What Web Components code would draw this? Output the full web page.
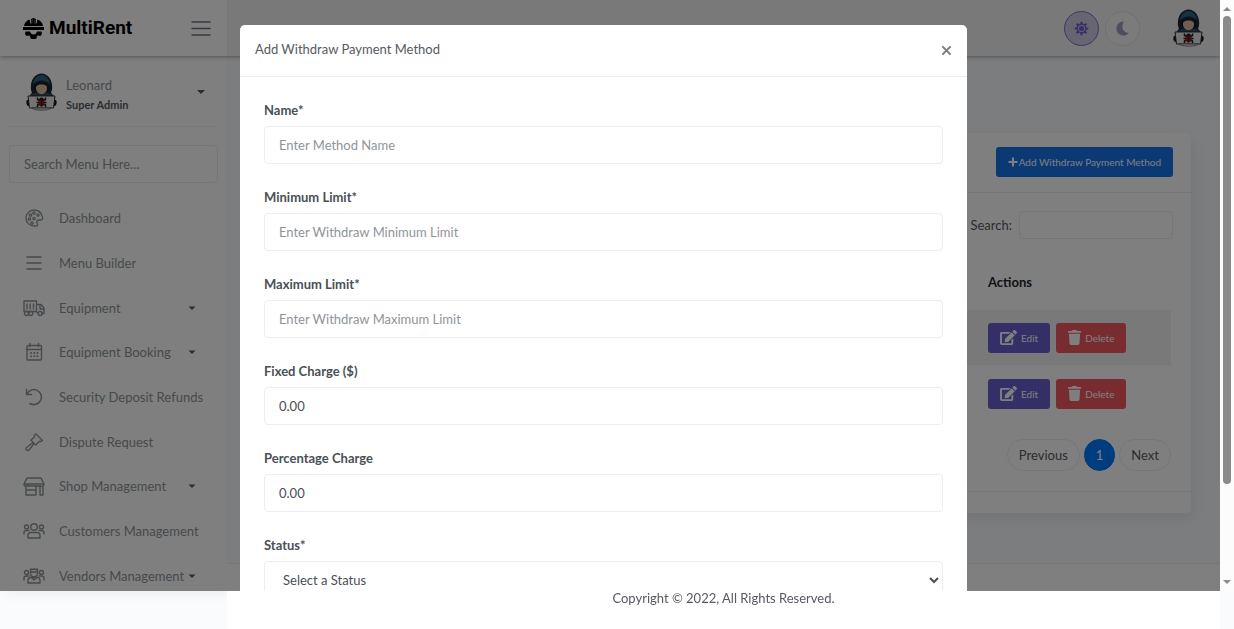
<!DOCTYPE html>
<html lang="en">
<head>
<meta charset="utf-8">
<meta name="viewport" content="width=device-width, initial-scale=1">
<title>MultiRent</title>
<style>
  :root {
    --view: calc(100vh - 38px);
    --bar: 14px;
    --side: 227px;
    --line: #ebedf2;
    --muted: #8d9498;
    --text: #575962;
  }
  body {
    margin: 0;
    overflow: hidden;
    background: #fafbfd;
    color: var(--text);
    font: 13px/20px Lato, "Liberation Sans", sans-serif;
  }
</style>
</head>
<body>
<rent-app></rent-app>

<script>
const stroke = 'fill="none" stroke="currentColor" stroke-linecap="round" stroke-linejoin="round"';

const icons = {
  logo: `<svg viewBox="0 0 42 42" fill="currentColor"><path d="M2 16C3 10 7 5 13 3l2 8h2l-1-9 3-1v10h4V1l3 1-1 9h2l2-8c6 2 10 7 11 13z"/><path d="M0 18h42v6H0z"/><path d="M5 27h9c1 4 4 6 7 6s6-2 7-6h9l1 5-3 4-5-1-2 1-1 5-3 1h-6l-3-1-1-5-2-1-5 1-3-4z"/><path d="M19 0h4v12h-4z"/></svg>`,
  bars: `<svg viewBox="0 0 22 22" ${stroke} stroke-width="1.6"><path d="M4 5h14M4 11h14M4 17h14"/></svg>`,
  menu: `<svg viewBox="0 0 20 20" ${stroke} stroke-width="1.4"><path d="M1 4h18M1 10.500h18M1 17h18"/></svg>`,
  palette: `<svg viewBox="0 0 22 22" ${stroke} stroke-width="1.3"><path d="M11 3a8 8 0 0 0-8 8c0 5 4 8 8 8h2c2 0 2-2 1-3s0-3 2-3h2c2 0 2-2 1-4-1-4-4-6-8-6z"/><circle cx="6.5" cy="12" r="1.2"/><circle cx="7.5" cy="8" r="1.2"/><circle cx="11" cy="6" r="1.2"/><circle cx="15" cy="8" r="1.2"/><circle cx="9" cy="16" r="1.2"/><circle cx="11" cy="11.500" r="1.200"/></svg>`,
  truck: `<svg viewBox="0 0 22 22" ${stroke} stroke-width="1.4"><path d="M1 4h12.500v10.500H1zM4 7v5M7.200 7v5M10.500 7v5M14 7.500h4l3 3.500v5.500h-2M14 15.500h1M17 7.500V12h4"/><circle cx="3.500" cy="16.500" r="2"/><circle cx="7.800" cy="16.500" r="2"/><circle cx="17.200" cy="16.500" r="2"/></svg>`,
  calendar: `<svg viewBox="0 0 22 22" ${stroke} stroke-width="1.4"><rect x="4" y="4.500" width="14.500" height="14.500" rx="1"/><path d="M4 8.500h14.500M7 2.500v3M15.500 2.500v3"/><path stroke-width="2" d="M8 12h.1M11.200 12h.1M14.400 12h.1M8 15.200h.1M11.200 15.200h.1M14.400 15.200h.1"/></svg>`,
  undo: `<svg viewBox="0 0 22 22" ${stroke} stroke-width="1.5"><path d="M3.500 3.500v5h5M4 8.200a7.500 7.500 0 1 1 3 9.300"/></svg>`,
  gavel: `<svg viewBox="0 0 22 22" ${stroke} stroke-width="1.4"><path d="M13 3l6.500 6.500-1.500 1-1.500-.2-3.800 3.700L8 9.300l3.700-3.800L11.500 4zM10 11.500l-6.500 5a1.700 1.700 0 0 0 2.500 2.500l5-6.500"/></svg>`,
  shop: `<svg viewBox="0 0 22 22" ${stroke} stroke-width="1.4"><path d="M4 3h14l3 6H1zM1 9c0 3 3.500 3 4 0M3 11v9h10v-9M3 15h10M17 11v9h3v-9M21 9c0 2-2 3-4 2H5"/></svg>`,
  users: `<svg viewBox="0 0 22 22" ${stroke} stroke-width="1.4"><circle cx="11" cy="7" r="3.300"/><circle cx="3.500" cy="7" r="2"/><circle cx="18.500" cy="7" r="2"/><path d="M5 18v-2.500c0-2 1.500-3 3-3h6c1.500 0 3 1 3 3V18zM1 14v-1.500c0-1.200 1-2 2.500-2H6M21 14v-1.500c0-1.200-1-2-2.500-2H16"/></svg>`,
  vendors: `<svg viewBox="0 0 22 22" ${stroke} stroke-width="1.4"><path d="M7.500 4l1.500.5 2-.5 2 .5 1.500-.5v4.500a3.500 3.500 0 0 1-7 0zM7.500 7h7"/><circle cx="3.500" cy="7.500" r="2"/><circle cx="18.500" cy="7.500" r="2"/><path d="M5 18v-2.500c0-2 1.500-3 3-3h6c1.500 0 3 1 3 3V18zM9 13l2 2 2-2M1 15v-2c0-1.200 1-2 2.500-2H6M21 15v-2c0-1.200-1-2-2.500-2H16"/></svg>`,
  caret: `<svg viewBox="0 0 8 8" fill="currentColor"><path d="M.5 2.500h7L4 6z"/></svg>`,
  up: `<svg viewBox="0 0 8 8" fill="currentColor"><path d="M0 6h8L4 2z"/></svg>`,
  down: `<svg viewBox="0 0 8 8" fill="currentColor"><path d="M0 2h8L4 6z"/></svg>`,
  sun: `<svg viewBox="0 0 16 16" fill="none" stroke="currentColor"><circle cx="8" cy="8" r="4.500" stroke-width="1.600"/><circle cx="8" cy="8" r="2.700" fill="currentColor" stroke="none"/><path stroke-width="2.200" d="M8 .8v2.500M8 12.700v2.500M.8 8h2.500M12.700 8h2.500M2.900 2.900l1.800 1.800M11.300 11.300l1.800 1.800M2.900 13.100l1.800-1.800M11.300 4.700l1.800-1.800"/></svg>`,
  moon: `<svg viewBox="0 0 16 16" fill="currentColor"><path d="M9.500.6A7.500 7.500 0 1 0 15 12.600C9.500 13.500 5.500 6.500 9.500.6z"/></svg>`,
  plus: `<svg viewBox="0 0 10 10" fill="currentColor"><path d="M4 .5h2V4h3.500v2H6v3.500H4V6H.5V4H4z"/></svg>`,
  close: `<svg viewBox="0 0 12 12" fill="none" stroke="currentColor" stroke-width="2.200"><path d="M1.500 1.500l9 9M10.500 1.500l-9 9"/></svg>`,
  edit: `<svg viewBox="0 0 576 512" fill="currentColor"><path d="M402 83l91 91c4 4 4 10 0 14L273 408l-94 10c-12 2-23-9-21-21l10-94L388 83c4-4 10-4 14 0zm163-23l-49-49c-15-15-40-15-55 0l-36 36c-4 4-4 10 0 14l91 91c4 4 10 4 14 0l35-37c16-15 16-40 0-55zM384 346v102H64V128h230c3 0 6-1 8-4l40-40c8-7 3-20-8-20H48C22 64 0 86 0 112v352c0 26 22 48 48 48h352c27 0 48-22 48-48V306c0-11-13-16-20-8l-40 40c-3 2-4 5-4 8z"/></svg>`,
  trash: `<svg viewBox="0 0 448 512" fill="currentColor"><path d="M432 32H312l-9-19C299 5 291 0 282 0H166c-9 0-17 5-21 13l-9 19H16C7 32 0 39 0 48v32c0 9 7 16 16 16h416c9 0 16-7 16-16V48c0-9-7-16-16-16zM53 467c2 25 23 45 48 45h246c25 0 46-20 48-45l21-339H32z"/></svg>`,
  hacker: `<svg viewBox="0 0 62 76"><path fill="#1b2833" d="M31 1C20 1 11 11 10 24c-1 6 0 11 2 15L4 50v8h54v-8l-8-11c2-4 3-9 2-15C51 11 42 1 31 1z"/><path fill="#2f6480" d="M31 4c-9 0-16 8-17 18 5-4 10-7 17-7s12 3 17 7C47 12 40 4 31 4z"/><path fill="#15202a" d="M15 29c2-7 9-11 16-11s14 4 16 11c1 8-6 15-16 15s-17-7-16-15z"/><path fill="#e5bd98" d="M20 28c2-4 6-5 11-5s9 1 11 5c1 8-5 15-11 15s-12-7-11-15z"/><path fill="#2a5067" d="M12 42l9-3 10 4 10-4 9 3 4 4H8z"/><path fill="#111" d="M2 54h6v12H4c-4-3-4-9-2-12zM54 54h6c2 3 2 9-2 12h-4z"/><path fill="#e9e9ea" stroke="#222" stroke-width="1.800" d="M4 46h54l-3 24H7z"/><path fill="#d0d2d5" stroke="#333" d="M12 70h38c-4 6-34 6-38 0z"/><path fill="none" stroke="#1c1c1c" stroke-width="3" d="M23 49v4l4 2M39 49v4l-4 2M21 59h20M23 68v-4l4-2M39 68v-4l-4-2"/><ellipse cx="31" cy="59" rx="6" ry="8" fill="#8c1c22"/><path fill="#1c1c1c" d="M26 54a5 5 0 0 1 10 0zM30 55h2v12h-2z"/></svg>`
};

// Shared base: every element puts its own markup and styles in an open root
class BaseElement extends HTMLElement {
  connectedCallback() {
    if (this.shadowRoot) return;
    this.attachShadow({ mode: "open" });
    this.shadowRoot.innerHTML = `
      <style>
        *, *::before { box-sizing: border-box; }
        button, input, select { font: inherit; color: inherit; margin: 0; }
        button { cursor: pointer; padding: 0; border: 0; background: none; }
        a { color: inherit; text-decoration: none; }
      </style>
      ${this.template()}`;
  }
}

class AppIcon extends BaseElement {
  template() {
    return `
      <style>
        :host { display: block; flex: none; width: var(--w, 22px); height: var(--h, var(--w, 22px)); }
        svg { display: block; width: 100%; height: 100%; }
      </style>
      ${icons[this.getAttribute("name")]}`;
  }
}
customElements.define("app-icon", AppIcon);

class TopBar extends BaseElement {
  template() {
    return `
      <style>
        :host { display: flex; height: 56px; background: #f2f2f2; box-shadow: 0 1px 4px rgba(0, 0, 0, .35); position: relative; z-index: 1; }
        .brand { display: flex; align-items: center; justify-content: space-between; width: var(--side); padding: 0 16px 0 23px; background: #fff; }
        .logo { display: flex; align-items: center; gap: 5px; color: #000; font: 700 19px/24px Roboto, "Liberation Sans", sans-serif; }
        .logo app-icon { --w: 21px; }
        .toggle { --w: 20px; color: #6b7280; }
        .tools { flex: 1; display: flex; align-items: center; justify-content: flex-end; padding-right: 16px; gap: 6px; }
        .round { display: grid; place-items: center; width: 35px; height: 35px; border-radius: 50%; border: 1px solid #e2e2e6; background: #f6f6f6; color: #99a1b8; --w: 15px; }
        .round.on { border-color: #7b6ee0; background: #cdcae0; color: #6c5dd3; }
        .avatar { margin-left: 27px; --w: 31px; --h: 38px; }
      </style>
      <div class="brand">
        <a class="logo" href="#"><app-icon name="logo"></app-icon>MultiRent</a>
        <button class="toggle" aria-label="Toggle menu"><app-icon name="menu"></app-icon></button>
      </div>
      <div class="tools">
        <button class="round on" aria-label="Light"><app-icon name="sun"></app-icon></button>
        <button class="round" aria-label="Dark"><app-icon name="moon"></app-icon></button>
        <button class="avatar" aria-label="Account"><app-icon name="hacker"></app-icon></button>
      </div>`;
  }
}
customElements.define("top-bar", TopBar);

class UserCard extends BaseElement {
  template() {
    return `
      <style>
        :host { display: block; padding: 17px 0 11px 17px; border-bottom: 1px solid #f1f1f1; }
        a { display: flex; align-items: flex-start; gap: 9px; }
        .who { padding-top: 2px; }
        .name { display: block; color: var(--muted); }
        .role { display: block; font-weight: 700; font-size: 11px; color: var(--text); }
        .pic { --w: 31px; --h: 38px; }
        .caret { --w: 8px; margin: 15px 13px 0 auto; }
      </style>
      <a href="#">
        <app-icon class="pic" name="hacker"></app-icon>
        <span class="who"><span class="name"><slot></slot></span><span class="role"><slot name="role"></slot></span></span>
        <app-icon class="caret" name="down"></app-icon>
      </a>`;
  }
}
customElements.define("user-card", UserCard);

class MenuItem extends BaseElement {
  template() {
    return `
      <style>
        :host { display: block; color: var(--muted); }
        a { display: flex; align-items: center; height: 100%; padding: 0 31px 0 23px; white-space: nowrap; }
        span { margin-left: 14px; }
        .caret { --w: 8px; margin-left: auto; color: var(--text); }
      </style>
      <a href="#">
        <app-icon name="${this.getAttribute("icon")}"></app-icon>
        <span><slot></slot></span>
        ${this.hasAttribute("sub") ? '<app-icon class="caret" name="caret"></app-icon>' : ""}
      </a>`;
  }
}
customElements.define("menu-item", MenuItem);

class SideMenu extends BaseElement {
  template() {
    return `
      <style>
        :host { display: flex; flex-direction: column; flex: none; width: var(--side); height: calc(var(--view) - 56px); background: #fff; box-shadow: 4px 4px 10px rgba(69, 65, 78, .06); }
        .head { padding: 0 9px; }
        input { display: block; width: 100%; height: 38px; margin: 18px 0 13px; padding: 0 14px; border: 1px solid var(--line); border-radius: 4px; background: none; }
        input::placeholder { color: var(--muted); opacity: 1; }
        nav { flex: 1; display: grid; grid-template-columns: 100%; grid-auto-rows: 1fr; margin-bottom: -7px; }
      </style>
      <div class="head">
        <user-card>Leonard<span slot="role">Super Admin</span></user-card>
        <input type="text" placeholder="Search Menu Here..." aria-label="Search menu">
      </div>
      <nav>
        <menu-item icon="palette">Dashboard</menu-item>
        <menu-item icon="bars">Menu Builder</menu-item>
        <menu-item icon="truck" sub>Equipment</menu-item>
        <menu-item icon="calendar" sub>Equipment Booking</menu-item>
        <menu-item icon="undo">Security Deposit Refunds</menu-item>
        <menu-item icon="gavel">Dispute Request</menu-item>
        <menu-item icon="shop" sub>Shop Management</menu-item>
        <menu-item icon="users">Customers Management</menu-item>
        <menu-item icon="vendors" sub>Vendors Management</menu-item>
      </nav>`;
  }
}
customElements.define("side-menu", SideMenu);

class SmallButton extends BaseElement {
  template() {
    return `
      <style>
        :host { display: inline-block; }
        button { display: flex; align-items: center; height: 30px; padding: 0 12px; border-radius: 3px; background: var(--fill); color: #fff; font-size: 10px; line-height: 16px; gap: var(--gap, 4px); white-space: nowrap; }
      </style>
      <button><app-icon name="${this.getAttribute("icon")}"></app-icon><slot></slot></button>`;
  }
}
customElements.define("small-button", SmallButton);

class MethodsCard extends BaseElement {
  template() {
    const row = `
      <tr><td></td><td><div class="acts">
        <small-button class="edit" icon="edit">Edit</small-button>
        <small-button class="del" icon="trash">Delete</small-button>
      </div></td></tr>`;
    return `
      <style>
        :host { display: block; background: #fff; border-radius: 5px; box-shadow: 2px 6px 15px rgba(69, 65, 78, .1); }
        header { display: flex; justify-content: flex-end; padding: 14px 18px 15px; border-bottom: 1px solid var(--line); }
        .add { --fill: #1572e8; --w: 10px; --gap: 1px; }
        .body { padding: 18px 20px 20px; }
        .find { display: flex; align-items: center; justify-content: flex-end; gap: 7px; margin-right: -2px; }
        .find input { width: 154px; height: 28px; border: 1px solid var(--line); border-radius: 3px; background: none; }
        table { width: 100%; border-collapse: collapse; margin: 14px 0 17px; }
        th, td { padding: 0; text-align: left; height: 57px; }
        th { color: #212529; font-weight: 700; }
        tbody tr:first-child { background: #f2f2f2; }
        tbody tr:first-child td { height: 55px; }
        th:last-child { width: 183px; }
        .acts { display: flex; gap: 6px; }
        .edit { --fill: #6861ce; --w: 17px; --h: 15px; }
        .del { --fill: #f25961; --w: 13px; --h: 15px; }
        .pager { display: flex; justify-content: flex-end; gap: 4px; }
        .pager button { height: 32px; padding: 0 11px; border: 1px solid var(--line); border-radius: 16px; }
        .pager .on { background: #007bff; border-color: #007bff; color: #fff; }
        footer { height: 22px; border-top: 1px solid var(--line); }
      </style>
      <header><small-button class="add" icon="plus">Add Withdraw Payment Method</small-button></header>
      <div class="body">
        <div class="find"><label for="q">Search:</label><input id="q" type="search"></div>
        <table>
          <thead><tr><th></th><th>Actions</th></tr></thead>
          <tbody>${row}${row}</tbody>
        </table>
        <div class="pager"><button>Previous</button><button class="on">1</button><button>Next</button></div>
      </div>
      <footer></footer>`;
  }
}
customElements.define("methods-card", MethodsCard);

class FormField extends BaseElement {
  template() {
    const type = this.getAttribute("type") || "text";
    const control = type === "select"
      ? `<select id="f"><option>${this.getAttribute("value")}</option></select>`
      : `<input id="f" type="text" value="${this.getAttribute("value") || ""}" placeholder="${this.getAttribute("hint") || ""}">`;
    return `
      <style>
        :host { display: block; color: #495057; }
        label { display: block; margin-bottom: 6px; font-weight: 700; }
        input, select { display: block; width: 100%; height: 38px; padding: 0 14px; border: 1px solid var(--line); border-radius: 4px; background: #fff; }
        input::placeholder { color: #8f9499; opacity: 1; }
      </style>
      <label for="f">${this.getAttribute("label")}</label>
      ${control}`;
  }
}
customElements.define("form-field", FormField);

class ModalDialog extends BaseElement {
  template() {
    return `
      <style>
        :host { display: flex; justify-content: center; align-items: flex-start; }
        section { width: 100%; max-width: 727px; background: #fff; border-radius: 5px; }
        header { display: flex; align-items: center; justify-content: space-between; height: 52px; padding: 0 15px; border-bottom: 1px solid var(--line); }
        h5 { margin: 0 0 3px; font-weight: 400; font-size: 13px; }
        button { --w: 11px; color: #7b7b7b; }
        .body { display: flex; flex-direction: column; gap: 23px; padding: 23px 24px; }
      </style>
      <section role="dialog" aria-labelledby="t">
        <header><h5 id="t">${this.getAttribute("heading")}</h5><button aria-label="Close"><app-icon name="close"></app-icon></button></header>
        <div class="body"><slot></slot></div>
      </section>`;
  }
}
customElements.define("modal-dialog", ModalDialog);

class ScrollTrack extends BaseElement {
  template() {
    return `
      <style>
        :host { display: flex; flex-direction: column; align-items: center; width: var(--bar); padding: 5px 0; background: #fcfcfc; color: #8b8b8b; --w: 8px; }
        .thumb { flex: 5; width: 8px; margin-top: 3px; border-radius: 4px; background: #8b8b8b; }
        .rest { flex: 1; }
      </style>
      <app-icon name="up"></app-icon><div class="thumb"></div><div class="rest"></div><app-icon name="down"></app-icon>`;
  }
}
customElements.define("scroll-track", ScrollTrack);

class RentApp extends BaseElement {
  template() {
    return `
      <style>
        :host { display: block; }
        .page { display: flex; flex-direction: column; min-height: 100vh; margin-right: var(--bar); }
        .cols { flex: 1; display: flex; align-items: flex-start; }
        main { align-self: stretch; flex: 1; display: flex; flex-direction: column; background: #f9fbfd; }
        .content { flex: 1; padding: 77px 29px 20px; }
        .copy { padding: 24px 0 21px; border-top: 1px solid #eee; background: #fff; text-align: center; }
        .copy p { margin: 0; position: relative; z-index: 3; }
        .layer { position: fixed; inset: 0 0 auto 0; z-index: 2; height: var(--view); display: flex; overflow: hidden; }
        modal-dialog { flex: 1; padding: 25px 13px 0 0; background: rgba(0, 0, 0, .5); }
      </style>
      <div class="page">
        <top-bar></top-bar>
        <div class="cols">
          <side-menu></side-menu>
          <main>
            <div class="content"><methods-card></methods-card></div>
            <div class="copy"><p>Copyright © 2022, All Rights Reserved.</p></div>
          </main>
        </div>
      </div>
      <div class="layer">
        <modal-dialog heading="Add Withdraw Payment Method">
          <form-field label="Name*" hint="Enter Method Name"></form-field>
          <form-field label="Minimum Limit*" hint="Enter Withdraw Minimum Limit"></form-field>
          <form-field label="Maximum Limit*" hint="Enter Withdraw Maximum Limit"></form-field>
          <form-field label="Fixed Charge ($)" value="0.00"></form-field>
          <form-field label="Percentage Charge" value="0.00"></form-field>
          <form-field label="Status*" type="select" value="Select a Status"></form-field>
        </modal-dialog>
        <scroll-track></scroll-track>
      </div>`;
  }
}
customElements.define("rent-app", RentApp);
</script>
</body>
</html>
